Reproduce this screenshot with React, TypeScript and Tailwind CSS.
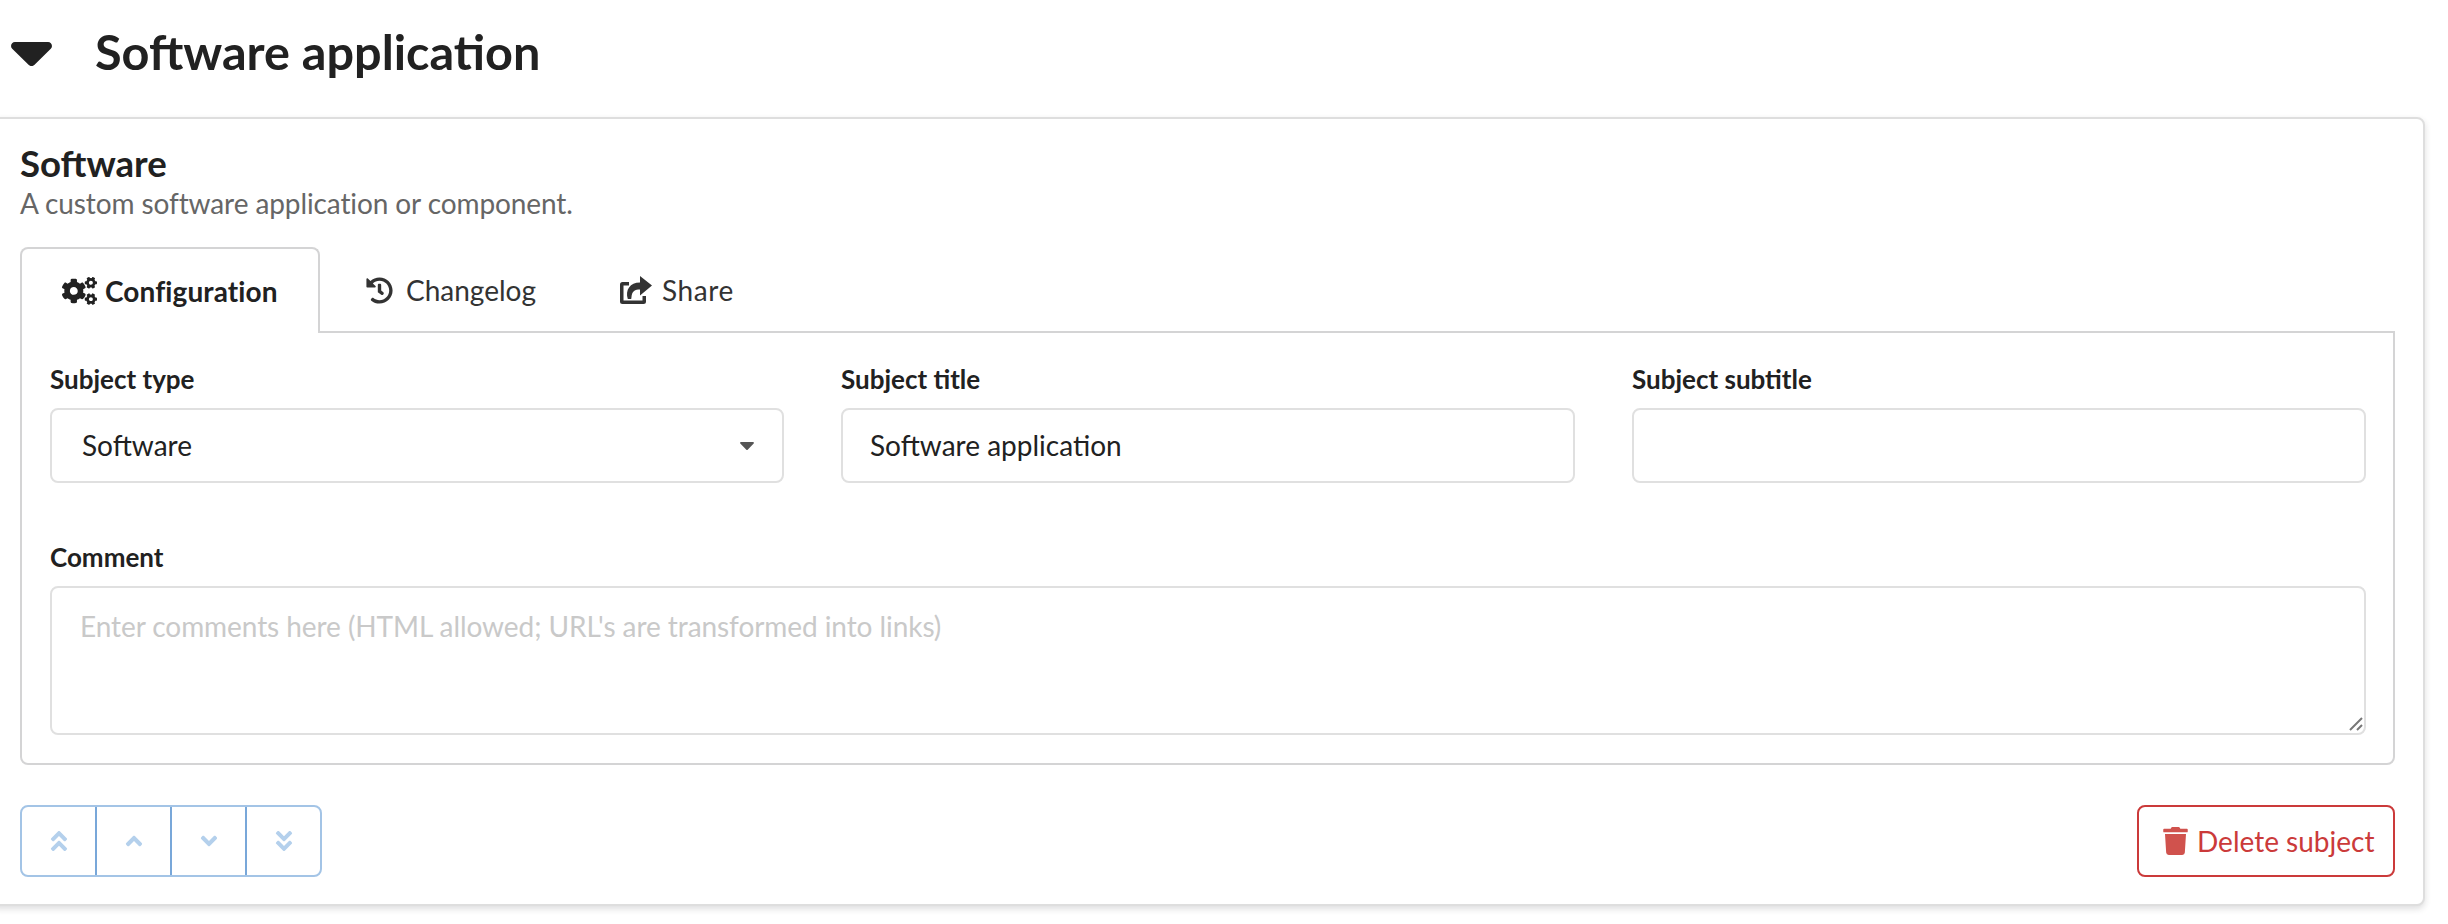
import { FaCaretDown, FaCogs, FaHistory, FaTrash, FaAngleDoubleUp, FaAngleUp, FaAngleDown, FaAngleDoubleDown } from "react-icons/fa";

const font = "font-['Lato',sans-serif]";

function Field({ label, children }: { label: string; children: React.ReactNode }) {
  return (
    <div className="w-[734px] flex flex-col">
      <label className="text-[26px] leading-[32px] font-bold text-[#212121] mb-[13px]">{label}</label>
      {children}
    </div>
  );
}

function MoveButton({ children, last }: { children: React.ReactNode; last?: boolean }) {
  return (
    <button className={`h-[68px] flex items-center justify-center text-[#b4d0ec] ${last ? "w-[73px]" : "w-[75px] border-r-2 border-r-[#78a7d9]"}`}>
      {children}
    </button>
  );
}

function ShareIcon() {
  return (
    <svg viewBox="0 0 32 28" className="w-[32px] h-[28px] ml-[1px] mr-[10px] shrink-0" fill="currentColor">
      <path d="M0 8.5A2.5 2.5 0 0 1 2.5 6H9v3.5H3.5v15h19V20H26v5.5a2.5 2.5 0 0 1-2.5 2.5h-21A2.5 2.5 0 0 1 0 25.5z" />
      <path d="M20 0l12 9.5L20 19.5v-6c-5 0-8 1.5-8.500 7.500l-.3 2H7.800C5 14 10 6.500 20 6.500z" />
    </svg>
  );
}

export default function App() {
  return (
    <div className={`${font} w-[2448px] h-[924px] bg-white overflow-hidden antialiased text-[#212121]`}>
      <div className="h-[117px] flex items-start pl-[11px] pt-[19px]">
        <svg viewBox="0 0 41 24" className="w-[41px] h-[24px] mt-[23px] shrink-0" fill="#212121">
          <path d="M4 0h33c3.500 0 5.300 4.200 2.800 6.800L23.300 23c-1.500 1.500-4 1.500-5.500 0L1.200 6.800C-1.300 4.200.5 0 4 0z" />
        </svg>
        <h2 className="ml-[43px] text-[48.6px] leading-[64px] font-bold text-[#212121]">Software application</h2>
      </div>
      <div className="-ml-[10px] w-[2435px] h-[789px] border-2 border-[#dedede] rounded-[8px] shadow-[0_3px_6px_0_rgba(34,36,38,0.15)] bg-white pl-[28px] pr-[28px] pt-[26px]">
        <div className="text-[36.6px] leading-[36px] font-bold text-[#212121]">Software</div>
        <div className="text-[28px] leading-[38px] tracking-[-0.1px] text-[#666666] mt-[3px]">A custom software application or component.</div>
        <div className="flex mt-[25px] h-[86px] relative z-10 text-[28px]">
          <div className="w-[300px] h-[86px] border-2 border-b-0 border-[#d4d4d5] rounded-t-[8px] bg-white flex items-center pl-[40px] font-bold tracking-[0.1px]">
            <FaCogs className="w-[35px] h-[28px] mr-[8px] shrink-0" />
            Configuration
          </div>
          <div className="flex items-center pl-[46px] pr-[42px] text-[#333333]">
            <FaHistory className="w-[27px] h-[27px] mr-[13px] shrink-0" />
            Changelog
          </div>
          <div className="flex items-center pl-[41px] text-[#333333] tracking-[0.6px]">
            <ShareIcon />
            Share
          </div>
        </div>
        <div className="-mt-[2px] h-[434px] border-2 border-[#d4d4d5] rounded-b-[8px] pl-[28px] pr-[27px] pt-[30px]">
          <div className="flex justify-between">
            <Field label="Subject type">
              <div className="h-[75px] border-2 border-[#e0e0e0] rounded-[8px] flex items-center justify-between pl-[30px] pr-[26px] pb-[2px] text-[28px] text-[#212121]">
                <span>Software</span>
                <FaCaretDown className="w-[18px] h-[24px] text-[#555555]" />
              </div>
            </Field>
            <Field label="Subject title">
              <input readOnly value="Software application" className="h-[75px] border-2 border-[#e0e0e0] rounded-[8px] pl-[27px] pr-[28px] pb-[1px] text-[28px] text-[#212121] outline-none" />
            </Field>
            <Field label="Subject subtitle">
              <input readOnly value="" className="h-[75px] border-2 border-[#e0e0e0] rounded-[8px] px-[28px] text-[28px] outline-none" />
            </Field>
          </div>
          <label className="block mt-[58px] text-[26px] leading-[32px] font-bold text-[#212121] mb-[13px]">Comment</label>
          <div className="relative">
            <textarea
              readOnly
              placeholder="Enter comments here (HTML allowed; URL's are transformed into links)"
              className="block w-full h-[149px] border-2 border-[#e0e0e0] rounded-[8px] px-[28px] pt-[20px] text-[28px] leading-[36px] tracking-[-0.07px] outline-none resize-none placeholder:text-[#c9c9c9]"
            />
            <svg viewBox="0 0 16 16" className="absolute right-[2px] bottom-[4px] w-[16px] h-[16px]" stroke="#777777" strokeWidth="2" fill="none">
              <path d="M2 15L14 3M9 15l5-5" />
            </svg>
          </div>
        </div>
        <div className="mt-[40px] flex justify-between items-start">
          <div className="flex h-[72px] border-2 border-[#a3c4e6] rounded-[8px] overflow-hidden">
            <MoveButton><FaAngleDoubleUp className="w-[22px] h-[26px]" /></MoveButton>
            <MoveButton><FaAngleUp className="w-[20px] h-[26px]" /></MoveButton>
            <MoveButton><FaAngleDown className="w-[20px] h-[26px]" /></MoveButton>
            <MoveButton last><FaAngleDoubleDown className="w-[22px] h-[26px]" /></MoveButton>
          </div>
          <button className="w-[258px] h-[72px] border-2 border-[#cb3a3a] rounded-[8px] flex items-center pl-[24px] text-[28px] text-[#cb3a3a]">
            <FaTrash className="w-[25px] h-[28px] mr-[9px] text-[#d0524d] shrink-0" />
            Delete subject
          </button>
        </div>
      </div>
    </div>
  );
}
